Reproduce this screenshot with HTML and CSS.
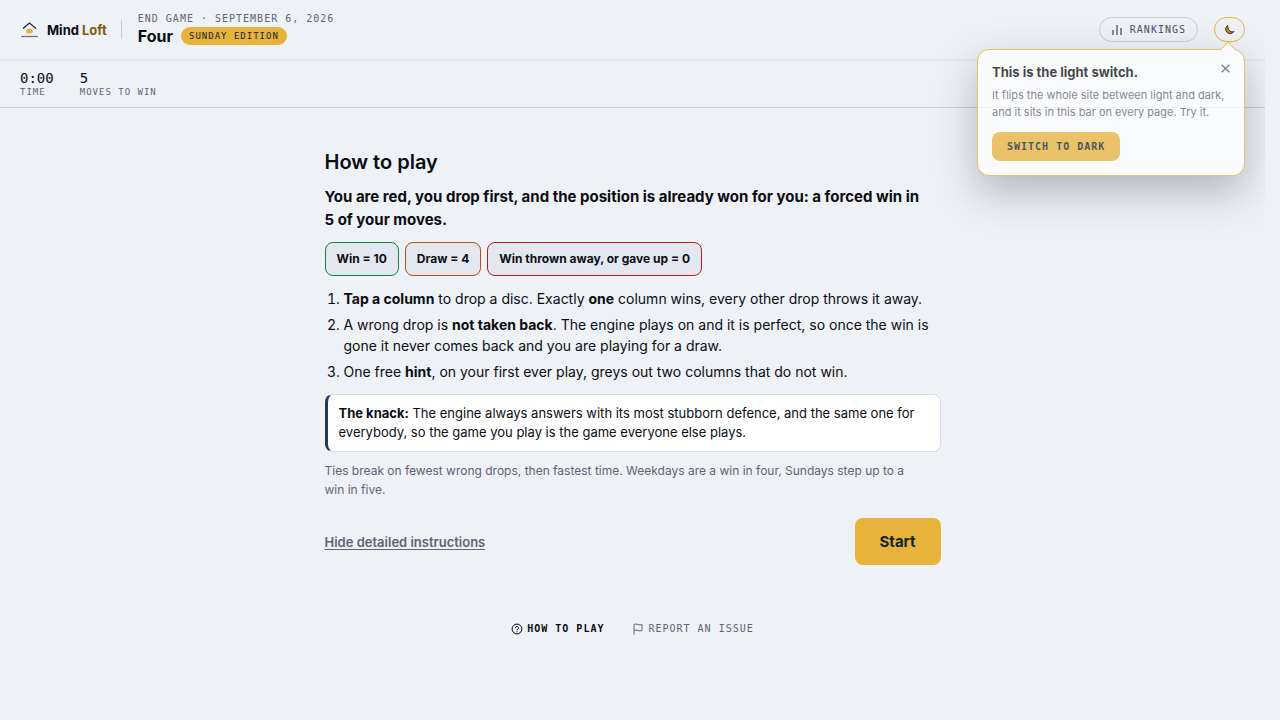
FILE: index.html
```html
<!DOCTYPE html>
<html lang="en">
<head>
    <meta charset="UTF-8">
    <meta name="viewport" content="width=device-width, initial-scale=1.0">
    <title>Four - Mind Loft</title>
    <link rel="stylesheet" href="styles.css">
</head>
<body>
    <div class="page">
        <header class="topbar">
            <a class="brand" href="#">
                <svg class="brand-icon" width="20" height="20" viewBox="0 0 20 20" fill="none">
                    <path d="M3 8.500 9.500 3 16 8.500" stroke="#23262e" stroke-width="1.300"/>
                    <ellipse cx="9.500" cy="11" rx="3.400" ry="2.600" fill="#e8b33a"/>
                    <path d="M1.300 16.500h16.500" stroke="#6d7079" stroke-width="1.300"/>
                </svg>
                <span>Mind <span class="brand-accent">Loft</span></span>
            </a>

            <div class="game-title">
                <p class="eyebrow">End game · September 6, 2026</p>
                <div class="title-row">
                    <h1>Four</h1>
                    <span class="badge">Sunday edition</span>
                </div>
            </div>

            <div class="actions">
                <a class="pill" href="#">
                    <svg width="12" height="12" viewBox="0 0 12 12" fill="#84899a">
                        <rect x="0" y="6" width="2" height="5"/>
                        <rect x="4" y="1" width="2" height="10"/>
                        <rect x="8" y="4" width="2" height="7"/>
                    </svg>
                    Rankings
                </a>
                <div class="theme">
                    <button class="theme-btn" type="button" aria-label="Switch theme">
                        <svg width="12" height="12" viewBox="0 0 12 12" fill="#b98a26" stroke="#51390a" stroke-width="1">
                            <path d="M3.500 1.500A4.500 4.500 0 1 0 10 7.500Q8 8.600 6 7.300T3.500 1.500Z"/>
                        </svg>
                    </button>

                    <!-- Hint that hangs under the theme button -->
                    <div class="tip" role="dialog" aria-labelledby="tip-title">
                        <button class="tip-close" type="button" aria-label="Close">
                            <svg width="9" height="9" viewBox="0 0 9 9" stroke="#5b6172" stroke-width="1.500">
                                <path d="M.7.7l7.600 7.600M8.300.7.7 8.300"/>
                            </svg>
                        </button>
                        <h2 id="tip-title">This is the light switch.</h2>
                        <p>It flips the whole site between light and dark, and it sits in this bar on every page. Try it.</p>
                        <button class="tip-btn" type="button">Switch to dark</button>
                    </div>
                </div>
            </div>
        </header>

        <dl class="stats">
            <div>
                <dt>Time</dt>
                <dd>0:00</dd>
            </div>
            <div>
                <dt>Moves to win</dt>
                <dd>5</dd>
            </div>
        </dl>

        <main class="intro">
            <h2>How to play</h2>
            <p class="lead">You are red, you drop first, and the position is already won for you: a forced win in 5 of your moves.</p>

            <ul class="scores">
                <li class="win">Win = 10</li>
                <li class="draw">Draw = 4</li>
                <li class="loss">Win thrown away, or gave up = 0</li>
            </ul>

            <ol class="rules">
                <li><b>Tap a column</b> to drop a disc. Exactly <b>one</b> column wins, every other drop throws it away.</li>
                <li>A wrong drop is <b>not taken back</b>. The engine plays on and it is perfect, so once the win is gone it never comes back and you are playing for a draw.</li>
                <li>One free <b>hint</b>, on your first ever play, greys out two columns that do not win.</li>
            </ol>

            <p class="knack"><b>The knack:</b> The engine always answers with its most stubborn defence, and the same one for everybody, so the game you play is the game everyone else plays.</p>
            <p class="note">Ties break on fewest wrong drops, then fastest time. Weekdays are a win in four, Sundays step up to a win in five.</p>

            <div class="start-row">
                <button class="link-btn" type="button">Hide detailed instructions</button>
                <button class="start-btn" type="button">Start</button>
            </div>
        </main>

        <footer class="footer">
            <a class="current" href="#">
                <svg width="12" height="12" viewBox="0 0 12 12" fill="none" stroke="currentColor">
                    <circle cx="6" cy="6" r="4.900"/>
                    <path d="M4.500 4.900a1.500 1.500 0 1 1 2.200 1.300q-.7.400-.7 1M6 8.200v1"/>
                </svg>
                How to play
            </a>
            <a href="#">
                <svg width="12" height="12" viewBox="0 0 12 12" fill="none" stroke="currentColor">
                    <path d="M2 11.500v-10q2-1 4 0t4 0v6q-2 1-4 0t-4 0"/>
                </svg>
                Report an issue
            </a>
        </footer>
    </div>
</body>
</html>
```
FILE: styles.css
```css
:root {
    --bg: #eef1f6;
    --ink: #0b0d13;
    --muted: #5f6475;
    --gold: #e8b33a;
    --line: #c8ccd4;
    --sans: Inter, "Open Sans", sans-serif;
    --mono: "DejaVu Sans Mono", "Liberation Mono", monospace;
}

* {
    box-sizing: border-box;
}

body {
    margin: 0;
    padding-right: 15px;
    background: var(--bg);
    color: var(--ink);
    font-family: var(--sans);
}

h1, h2, p, ul, ol, dl, dd {
    margin: 0;
    padding: 0;
}

button {
    padding: 0;
    border: 0;
    background: none;
    color: inherit;
    font-family: inherit;
    cursor: pointer;
}

a {
    color: inherit;
    text-decoration: none;
}

svg {
    display: block;
    flex: none;
}

.page {
    min-height: 100vh;
    overflow: clip;
}

/* Top bar */
.topbar {
    display: flex;
    align-items: center;
    height: 61px;
    padding: 0 20px;
    border-bottom: 2px solid #e3e7f0;
}

.brand {
    display: flex;
    align-items: center;
    gap: 7px;
    font-size: 13px;
    font-weight: 700;
}

.brand-accent {
    color: #83590c;
}

.game-title {
    position: relative;
    margin-left: 31px;
}

.game-title::before {
    content: "";
    position: absolute;
    left: -17px;
    top: 7px;
    width: 1px;
    height: 19px;
    background: var(--line);
}

.eyebrow {
    color: var(--muted);
    font: 10px/12px var(--mono);
    letter-spacing: 1px;
    text-transform: uppercase;
}

.title-row {
    display: flex;
    align-items: center;
    gap: 8px;
}

.title-row h1 {
    font-size: 16px;
    line-height: 22px;
    font-weight: 700;
}

.badge {
    padding: 0 8px;
    border-radius: 9px;
    background: var(--gold);
    color: #10242b;
    font: 9px/18px var(--mono);
    letter-spacing: 1px;
    text-transform: uppercase;
}

.actions {
    display: flex;
    align-items: center;
    gap: 16px;
    margin-left: auto;
}

.pill {
    display: flex;
    align-items: center;
    gap: 6px;
    height: 25px;
    padding: 0 11px 0 12px;
    border: 1px solid var(--line);
    border-radius: 13px;
    color: #4c5163;
    font: 10px var(--mono);
    letter-spacing: 1px;
    text-transform: uppercase;
}

.theme {
    position: relative;
}

.theme-btn {
    display: flex;
    align-items: center;
    justify-content: center;
    width: 31px;
    height: 25px;
    border: 1px solid var(--gold);
    border-radius: 13px;
}

/* Light switch tip */
.tip {
    position: absolute;
    top: 32px;
    right: 0;
    width: 268px;
    padding: 13px 14px 14px;
    border: 1px solid var(--gold);
    border-radius: 12px;
    background: #fff;
    box-shadow: 0 16px 40px rgba(10, 14, 24, 0.35);
    opacity: 0.75;
}

.tip::before {
    content: "";
    position: absolute;
    top: -6px;
    right: 10px;
    width: 11px;
    height: 11px;
    border: solid var(--gold);
    border-width: 1px 0 0 1px;
    background: #fff;
    transform: rotate(45deg);
}

.tip h2 {
    font-size: 13px;
    line-height: 18px;
    font-weight: 700;
}

.tip p {
    margin: 6px 0 11px;
    color: var(--muted);
    font-size: 11px;
    line-height: 17px;
}

.tip-close {
    position: absolute;
    top: 14px;
    right: 14px;
}

.tip-btn {
    display: block;
    padding: 0 15px;
    border-radius: 8px;
    background: var(--gold);
    color: #10242b;
    font: bold 10px/29px var(--mono);
    letter-spacing: 1px;
    text-transform: uppercase;
}

/* Time and moves */
.stats {
    display: flex;
    gap: 26px;
    padding: 9px 20px;
    border-bottom: 1px solid var(--line);
}

.stats div {
    display: flex;
    flex-direction: column-reverse;
}

.stats dt {
    color: var(--muted);
    font: 9px/11px var(--mono);
    letter-spacing: 1px;
    text-transform: uppercase;
}

.stats dd {
    font: 14px/17px var(--mono);
}

/* Instructions */
.intro {
    max-width: 656px;
    margin: 0 auto;
    padding: 40px 20px 0;
}

.intro h2 {
    font-size: 20px;
    line-height: 28px;
    font-weight: 600;
}

.lead,
.note {
    max-width: 600px;
}

.lead {
    margin-top: 9px;
    font-size: 15px;
    line-height: 23px;
    font-weight: 700;
}

.scores {
    display: flex;
    flex-wrap: wrap;
    gap: 6px;
    margin-top: 11px;
    list-style: none;
}

.scores li {
    padding: 0 11px;
    border: 1px solid;
    border-radius: 8px;
    background: #e3e7f0;
    font-size: 12px;
    line-height: 32px;
    font-weight: 700;
}

.scores .win {
    border-color: #15803d;
}

.scores .draw {
    border-color: #b45309;
}

.scores .loss {
    border-color: #b91c1c;
}

.rules {
    display: grid;
    gap: 5px;
    margin-top: 12px;
    padding-left: 19px;
    font-size: 14px;
    line-height: 21px;
}

.knack {
    margin-top: 12px;
    padding: 9px 11px;
    border: 1px solid #d9dce3;
    border-left: 3px solid #1f3864;
    border-radius: 8px;
    background: #fff;
    font-size: 13px;
    line-height: 19px;
}

.note {
    margin-top: 9px;
    color: var(--muted);
    font-size: 12px;
    line-height: 19px;
}

.start-row {
    display: flex;
    align-items: center;
    justify-content: space-between;
    margin-top: 19px;
}

.link-btn {
    color: var(--muted);
    font-size: 13px;
    font-weight: 600;
    text-decoration: underline;
    text-underline-offset: 2px;
}

.start-btn {
    padding: 0 25px;
    border-radius: 8px;
    background: var(--gold);
    color: #10242b;
    font-size: 15px;
    line-height: 47px;
    font-weight: 700;
}

/* Footer links */
.footer {
    display: flex;
    justify-content: center;
    gap: 28px;
    padding: 56px 20px;
    color: var(--muted);
    font: 10px/16px var(--mono);
    letter-spacing: 1px;
    text-transform: uppercase;
}

.footer a {
    display: flex;
    align-items: center;
    gap: 4px;
}

.footer .current {
    color: var(--ink);
    font-weight: 700;
}
```
